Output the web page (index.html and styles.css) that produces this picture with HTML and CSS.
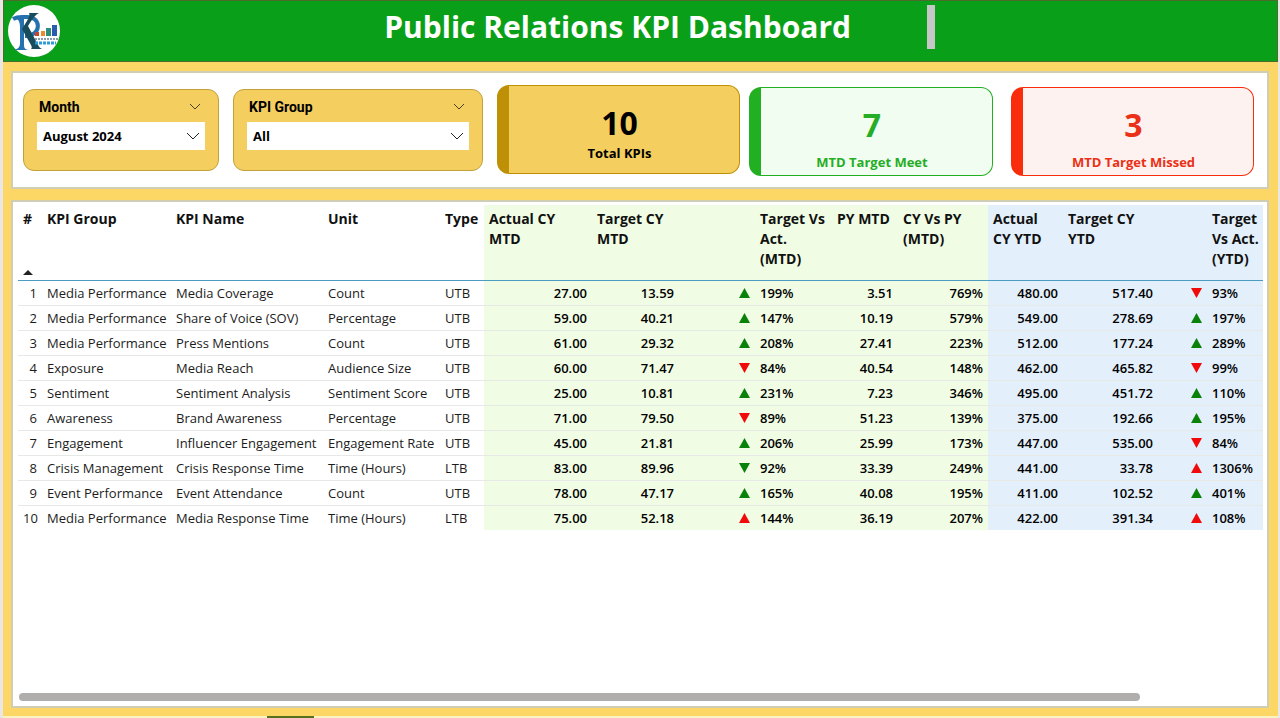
FILE: index.html
```html
<!DOCTYPE html>
<html lang="en">
  <head>
    <meta charset="UTF-8" />
    <meta name="viewport" content="width=device-width, initial-scale=1.0" />
    <title>Public Relations KPI Dashboard</title>
    <link rel="stylesheet" href="styles.css">
  </head>
  <body>
    <header class="topbar">
      <svg class="logo" viewBox="0 0 52 52" aria-hidden="true">
        <circle cx="26" cy="26" r="26" fill="#fff" />
        <path d="M5 14C10 11 14 12 18 12C34 11 34 31 17 31" fill="none" stroke="#2672b0" stroke-width="4" />
        <path d="M7 13C11 14 12 18 12 22V38C12 42 10 44 6 45H20C16 44 16 42 16 38V14Z" fill="#2672b0" />
        <path d="M21 8H31C27 10 25 13 20 21L29 38C31 42 32 43 34 44H23C24 43 24 42 23 40L14 24C18 17 23 11 21 8Z" fill="#164c5c" />
        <path d="M27 27h4v4h-4z" fill="#c8452c" />
        <path d="M33 26h4v5h-4z" fill="#ef8a2c" />
        <path d="M38 23h5v8h-5z" fill="#2d8c7c" />
        <path d="M44 20h5v11h-5z" fill="#2a5db0" />
        <path d="M27 34H50" stroke="#8b9aa8" stroke-width="2" stroke-dasharray="2 1" />
        <path d="M27 38H48" stroke="#2a9bd6" stroke-width="3" stroke-dasharray="3 1" />
      </svg>
      <h1>Public Relations KPI Dashboard</h1>
      <span class="divider"></span>
    </header>

    <main>
      <section class="panel summary">
        <div class="filter month">
          <div class="filter-head">
            <label for="month">Month</label>
            <button aria-label="Collapse month"><svg viewBox="0 0 12 7"><path d="M1 1L6 6L11 1" /></svg></button>
          </div>
          <div class="dropdown">
            <select id="month"><option>August 2024</option></select>
            <svg viewBox="0 0 14 8"><path d="M1 1L7 7L13 1" /></svg>
          </div>
        </div>
        <div class="filter group">
          <div class="filter-head">
            <label for="group">KPI Group</label>
            <button aria-label="Collapse KPI group"><svg viewBox="0 0 12 7"><path d="M1 1L6 6L11 1" /></svg></button>
          </div>
          <div class="dropdown">
            <select id="group"><option>All</option></select>
            <svg viewBox="0 0 14 8"><path d="M1 1L7 7L13 1" /></svg>
          </div>
        </div>
        <article class="card total">
          <strong>10</strong>
          <p>Total KPIs</p>
        </article>
        <article class="card meet">
          <strong>7</strong>
          <p>MTD Target Meet</p>
        </article>
        <article class="card missed">
          <strong>3</strong>
          <p>MTD Target Missed</p>
        </article>
      </section>

      <section class="panel report">
        <table>
          <colgroup>
            <col class="c-num"><col class="c-group"><col class="c-name"><col class="c-unit"><col class="c-type">
            <col class="c-act mtd"><col class="c-tgt mtd"><col class="c-vs mtd"><col class="c-py mtd"><col class="c-cypy mtd">
            <col class="c-yact ytd"><col class="c-ytgt ytd"><col class="c-yvs ytd">
          </colgroup>
          <thead>
            <tr>
              <th class="sorted"><div>#<span class="sort"></span></div></th>
              <th>KPI Group</th><th>KPI Name</th><th>Unit</th><th>Type</th>
              <th>Actual CY<br>MTD</th><th>Target CY<br>MTD</th><th class="vs">Target Vs<br>Act.<br>(MTD)</th><th>PY MTD</th><th>CY Vs PY<br>(MTD)</th>
              <th>Actual<br>CY YTD</th><th>Target CY<br>YTD</th><th class="yvs">Target<br>Vs Act.<br>(YTD)</th>
            </tr>
          </thead>
          <tbody>
            <tr><td>1</td><td>Media Performance</td><td>Media Coverage</td><td>Count</td><td>UTB</td><td>27.00</td><td>13.59</td><td><i class="up good"></i>199%</td><td>3.51</td><td>769%</td><td>480.00</td><td>517.40</td><td><i class="down bad"></i>93%</td></tr>
            <tr><td>2</td><td>Media Performance</td><td>Share of Voice (SOV)</td><td>Percentage</td><td>UTB</td><td>59.00</td><td>40.21</td><td><i class="up good"></i>147%</td><td>10.19</td><td>579%</td><td>549.00</td><td>278.69</td><td><i class="up good"></i>197%</td></tr>
            <tr><td>3</td><td>Media Performance</td><td>Press Mentions</td><td>Count</td><td>UTB</td><td>61.00</td><td>29.32</td><td><i class="up good"></i>208%</td><td>27.41</td><td>223%</td><td>512.00</td><td>177.24</td><td><i class="up good"></i>289%</td></tr>
            <tr><td>4</td><td>Exposure</td><td>Media Reach</td><td>Audience Size</td><td>UTB</td><td>60.00</td><td>71.47</td><td><i class="down bad"></i>84%</td><td>40.54</td><td>148%</td><td>462.00</td><td>465.82</td><td><i class="down bad"></i>99%</td></tr>
            <tr><td>5</td><td>Sentiment</td><td>Sentiment Analysis</td><td>Sentiment Score</td><td>UTB</td><td>25.00</td><td>10.81</td><td><i class="up good"></i>231%</td><td>7.23</td><td>346%</td><td>495.00</td><td>451.72</td><td><i class="up good"></i>110%</td></tr>
            <tr><td>6</td><td>Awareness</td><td>Brand Awareness</td><td>Percentage</td><td>UTB</td><td>71.00</td><td>79.50</td><td><i class="down bad"></i>89%</td><td>51.23</td><td>139%</td><td>375.00</td><td>192.66</td><td><i class="up good"></i>195%</td></tr>
            <tr><td>7</td><td>Engagement</td><td>Influencer Engagement</td><td>Engagement Rate</td><td>UTB</td><td>45.00</td><td>21.81</td><td><i class="up good"></i>206%</td><td>25.99</td><td>173%</td><td>447.00</td><td>535.00</td><td><i class="down bad"></i>84%</td></tr>
            <tr><td>8</td><td>Crisis Management</td><td>Crisis Response Time</td><td>Time (Hours)</td><td>LTB</td><td>83.00</td><td>89.96</td><td><i class="down good"></i>92%</td><td>33.39</td><td>249%</td><td>441.00</td><td>33.78</td><td><i class="up bad"></i>1306%</td></tr>
            <tr><td>9</td><td>Event Performance</td><td>Event Attendance</td><td>Count</td><td>UTB</td><td>78.00</td><td>47.17</td><td><i class="up good"></i>165%</td><td>40.08</td><td>195%</td><td>411.00</td><td>102.52</td><td><i class="up good"></i>401%</td></tr>
            <tr><td>10</td><td>Media Performance</td><td>Media Response Time</td><td>Time (Hours)</td><td>LTB</td><td>75.00</td><td>52.18</td><td><i class="up bad"></i>144%</td><td>36.19</td><td>207%</td><td>422.00</td><td>391.34</td><td><i class="up bad"></i>108%</td></tr>
          </tbody>
        </table>
        <div class="scrollbar"></div>
      </section>
    </main>
    <footer><span></span></footer>
  </body>
</html>
```
FILE: styles.css
```css
* {
  box-sizing: border-box;
}
body {
  margin: 0;
  padding: 0 2px 0 3px;
  min-height: 100vh;
  display: flex;
  flex-direction: column;
  background: #e9e6e3;
  font-family: "Open Sans", "Noto Sans", sans-serif;
  color: #000;
}

/* Top bar */
.topbar {
  height: 62px;
  padding: 0 342px 8px 4px;
  display: flex;
  align-items: center;
  background: #0a9f18;
  border: 1px solid #4d6b2c;
}
.logo {
  width: 52px;
  height: 52px;
  flex: none;
  margin-top: 8px;
}
h1 {
  flex: 1;
  margin: 0;
  padding-right: 76px;
  text-align: right;
  color: #fff;
  font-size: 30px;
  line-height: 44px;
}
.divider {
  width: 8px;
  height: 44px;
  background: #c6c8c6;
}

/* Panels */
main {
  flex: 1;
  display: flex;
  flex-direction: column;
  gap: 11px;
  padding: 9px 9px 8px 8px;
  background: #fdd765;
}
.panel {
  background: #fff;
  border: 2px solid #cfcdb4;
}
.summary {
  height: 118px;
  padding: 0 13px 1px 10px;
  display: grid;
  grid-template-columns: 210fr 264fr 252fr 262fr 243fr;
  align-items: center;
}

/* Filters */
.filter {
  height: 82px;
  padding: 8px 13px;
  background: #f4cf60;
  border: 1px solid #c2a03a;
  border-radius: 11px;
  margin-right: 14px;
}
.filter-head {
  display: flex;
  justify-content: space-between;
  align-items: center;
  height: 18px;
  padding: 0 2px;
  margin-bottom: 6px;
  font: bold 14px/18px Roboto, sans-serif;
}
.filter-head button {
  display: flex;
  align-items: center;
  border: 0;
  padding: 0;
  background: none;
  width: 14px;
  height: 14px;
}
.filter-head svg {
  width: 12px;
  height: 7px;
}
.filter svg {
  fill: none;
  stroke: #4a4020;
}
.dropdown {
  display: grid;
  align-items: center;
  background: #fff;
}
.dropdown select,
.dropdown svg {
  grid-area: 1 / 1;
}
.dropdown select {
  appearance: none;
  width: 100%;
  height: 28px;
  padding: 0 6px;
  border: 0;
  background: none;
  color: #000;
  font: bold 13px "Open Sans", sans-serif;
}
.dropdown svg {
  justify-self: end;
  width: 14px;
  height: 8px;
  margin-right: 5px;
  stroke: #222;
  pointer-events: none;
}

/* Cards */
.card {
  height: 89px;
  padding: 17px 9px 0 0;
  text-align: center;
  border: 1px solid;
  border-left-width: 12px;
  border-radius: 12px;
}
.card strong {
  display: block;
  font-size: 32px;
  line-height: 40px;
}
.card p {
  margin: 0;
  font-size: 13px;
  font-weight: bold;
  line-height: 20px;
}
.total {
  background: #f4cf60;
  border-color: #bd9005;
  margin-right: 9px;
}
.meet,
.missed {
  margin-top: 4px;
}
.meet p,
.missed p {
  margin-top: 7px;
}
.meet {
  color: #25ad25;
  background: #f2fdf2;
  border-color: #22b022;
  margin-right: 18px;
}
.missed {
  color: #ea3016;
  background: #fdf2f0;
  border-color: #f92d0b;
}

/* Table */
.report {
  flex: 1;
  display: flex;
  flex-direction: column;
  justify-content: space-between;
  padding: 3px 4px 5px 5px;
}
table {
  width: 100%;
  table-layout: fixed;
  border-collapse: separate;
  border-spacing: 0;
  font-size: 13px;
  font-weight: 500;
}
.c-num { width: 24px; }
.c-group { width: 129px; }
.c-name { width: 152px; }
.c-unit { width: 117px; }
.c-type { width: 44px; }
.c-act { width: 108px; }
.c-tgt { width: 87px; }
.c-vs { width: 153px; }
.c-py { width: 66px; }
.c-cypy { width: 90px; }
.c-yact { width: 75px; }
.c-ytgt { width: 95px; }
.c-yvs { width: 105px; }
.mtd {
  background: #f0fde4;
}
.ytd {
  background: #e3effb;
}
th {
  height: 76px;
  padding: 4px 5px;
  text-align: left;
  vertical-align: top;
  white-space: nowrap;
  font-size: 14px;
  font-weight: bold;
  line-height: 20px;
  color: #111;
  border-bottom: 1px solid #4a9cc0;
}
.sorted div {
  height: 66px;
  display: flex;
  flex-direction: column;
  justify-content: space-between;
}
.sort {
  width: 10px;
  height: 5px;
  background: #222;
  clip-path: polygon(50% 0, 100% 100%, 0 100%);
}
th.vs {
  padding-left: 81px;
}
th.yvs {
  padding-left: 54px;
}
td {
  height: 25px;
  padding: 0 5px;
  white-space: nowrap;
  color: #1c1c1c;
  border-bottom: 1px solid #e6e9e6;
}
tr:last-child td {
  height: 24px;
  border-bottom: 0;
}
td:first-child,
td:nth-child(n+6) {
  text-align: right;
}
td:nth-child(n+6) {
  color: #000;
  font-weight: 600;
}
td:nth-child(8) {
  padding-left: 60px;
  text-align: left;
}
td:nth-child(13) {
  padding-left: 33px;
  text-align: left;
}
td i {
  display: inline-block;
  width: 11px;
  height: 10px;
  margin-right: 10px;
}
.up {
  clip-path: polygon(50% 0, 100% 100%, 0 100%);
}
.down {
  clip-path: polygon(0 0, 100% 0, 50% 100%);
}
.good {
  background: #0a820a;
}
.bad {
  background: #f00a0a;
}
.scrollbar {
  width: 90%;
  height: 8px;
  margin-left: 1px;
  border-radius: 4px;
  background: #b0aeac;
}

/* Bottom edge */
footer {
  height: 2px;
  padding-left: 264px;
  background: #fbf3c0;
}
footer span {
  display: block;
  width: 47px;
  height: 2px;
  background: #56701c;
}
```
